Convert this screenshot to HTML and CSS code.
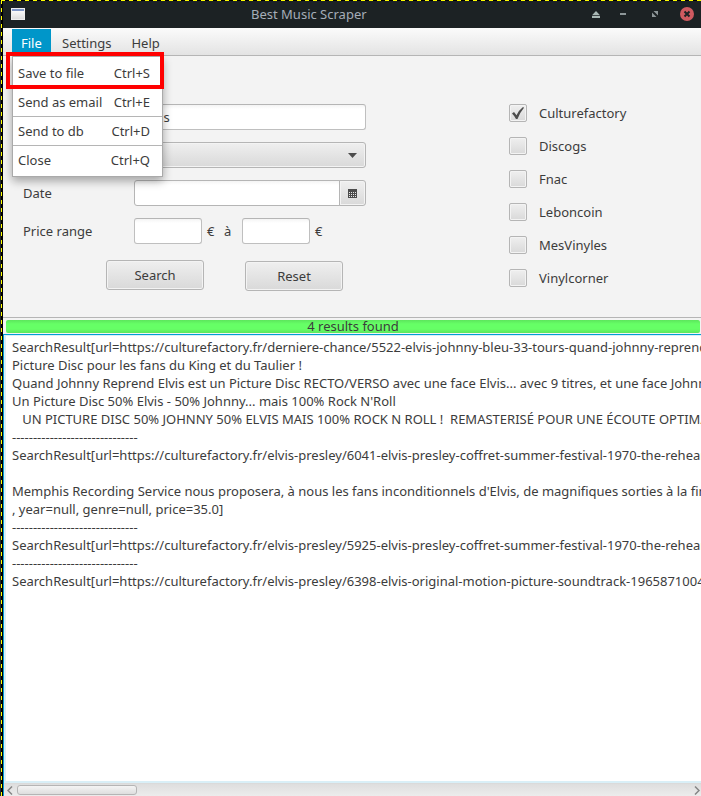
FILE: index.html
```html
<!DOCTYPE html>
<html lang="fr">
<head>
<meta charset="utf-8">
<title>Best Music Scraper</title>
<link rel="stylesheet" href="styles.css">
</head>
<body>
<div class="screen">
<div class="edge"></div>
<div class="window">
  <header class="titlebar">
    <span class="app-icon"></span>
    <span class="title">Best Music Scraper</span>
    <svg class="controls" width="121" height="27" viewBox="580 1 121 27">
      <path d="M592 15.200L596 11l4 4.200zM592 16h8v2h-8z" fill="#a9b8b5"/>
      <path d="M620 13h6v2h-6z" fill="#8d9698"/>
      <path d="M653.500 11h4.500v4.500zM652 12.500l4.500 4.500H652z" fill="#8d9698"/>
      <circle cx="687" cy="14" r="7" fill="#cf5a60"/>
      <path d="M684.500 11.500l5 5m0-5l-5 5" stroke="#1c2224" stroke-width="2"/>
    </svg>
  </header>
  <nav class="menubar">
    <span class="menu active">File</span><span class="menu">Settings</span><span class="menu">Help</span>
  </nav>
  <main class="form">
    <section class="fields">
      <div class="row"><label></label><div class="input wide">s</div></div>
      <div class="row"><label></label><div class="combo"><svg width="9" height="5"><path d="M0 0h9L4.500 5z" fill="#4c4c4c"/></svg></div></div>
      <div class="row"><label>Date</label><div class="date"><div class="date-text"></div><div class="date-button">
        <svg width="9" height="9" shape-rendering="crispEdges"><path d="M0 0h9v9H0z" fill="#4c4c4c"/><path d="M1 3.500h7M1 5.500h7M1 7.500h7" stroke="#e6e6e6" stroke-dasharray="1 1"/></svg>
      </div></div></div>
      <div class="row price"><label>Price range</label><div class="input small"></div><span class="euro">€</span><span class="to">à</span><div class="input small"></div><span class="euro">€</span></div>
      <div class="buttons"><div class="button">Search</div><div class="button reset">Reset</div></div>
    </section>
    <section class="shops">
      <div class="check"><span class="box"><svg width="12" height="13" viewBox="0 0 12 13"><path d="M0 6.500L2 5l2.500 3.200Q7 3 11 0l1 .7Q7.500 6 5.500 12H4Q2.500 9 0 6.500z" fill="#4c4c4c"/></svg></span>Culturefactory</div>
      <div class="check"><span class="box"></span>Discogs</div>
      <div class="check"><span class="box"></span>Fnac</div>
      <div class="check"><span class="box"></span>Leboncoin</div>
      <div class="check"><span class="box"></span>MesVinyles</div>
      <div class="check"><span class="box"></span>Vinylcorner</div>
    </section>
  </main>
  <div class="status"><div class="bar">4 results found</div></div>
  <div class="results">
<pre class="text">SearchResult[url=https://culturefactory.fr/derniere-chance/5522-elvis-johnny-bleu-33-tours-quand-johnny-reprend-elvis.html
Picture Disc pour les fans du King et du Taulier !
Quand Johnny Reprend Elvis est un Picture Disc RECTO/VERSO avec une face Elvis... avec 9 titres, et une face Johnny
Un Picture Disc 50% Elvis - 50% Johnny... mais 100% Rock N'Roll
   UN PICTURE DISC 50% JOHNNY 50% ELVIS MAIS 100% ROCK N ROLL !  REMASTERISÉ POUR UNE ÉCOUTE OPTIMALE
------------------------------
SearchResult[url=https://culturefactory.fr/elvis-presley/6041-elvis-presley-coffret-summer-festival-1970-the-rehearsals.html

Memphis Recording Service nous proposera, à nous les fans inconditionnels d'Elvis, de magnifiques sorties à la fin
, year=null, genre=null, price=35.0]
------------------------------
SearchResult[url=https://culturefactory.fr/elvis-presley/5925-elvis-presley-coffret-summer-festival-1970-the-rehearsals.html
------------------------------
SearchResult[url=https://culturefactory.fr/elvis-presley/6398-elvis-original-motion-picture-soundtrack-196587100421.html</pre>
    <div class="scrollbar">
      <svg width="6" height="9"><path d="M5 .5L1 4.500l4 4" fill="none" stroke="#858585" stroke-width="1.500"/></svg>
      <span class="thumb"></span>
      <svg class="next" width="6" height="9"><path d="M1 .5l4 4-4 4" fill="none" stroke="#858585" stroke-width="1.500"/></svg>
    </div>
  </div>
</div>
<div class="popup">
  <div class="item"><span>Save to file</span><span class="key">Ctrl+S</span></div>
  <div class="item"><span>Send as email</span><span class="key">Ctrl+E</span></div>
  <div class="item"><span>Send to db</span><span class="key">Ctrl+D</span></div>
  <div class="item"><span>Close</span><span class="key">Ctrl+Q</span></div>
</div>
<div class="highlight"></div>
</div>
</body>
</html>
```
FILE: styles.css
```css
* { box-sizing: border-box; }
body { margin: 0; overflow: hidden; font: 13px/18px "Noto Sans", "Open Sans", sans-serif; color: #3c3c3c; background: #f3f3f3; }
.screen { position: relative; display: flex; width: 701px; height: 796px; overflow: hidden; }
.screen::before { content: ""; position: absolute; top: 0; left: 0; width: 701px; height: 1px; background: repeating-linear-gradient(90deg, #000 0 1px, #ff0 1px 5px, #000 5px 8px); }
.edge { flex: none; width: 3px; background: linear-gradient(90deg, #24292b 1px, transparent 1px 2px, #000 2px), repeating-linear-gradient(180deg, #ff0 0 4px, #000 4px 8px); }
.window { flex: 1; min-width: 0; display: flex; flex-direction: column; padding-top: 1px; }
.titlebar { height: 27px; flex: none; background: #1c2224; display: flex; align-items: center; padding-left: 8px; }
.app-icon { width: 14px; height: 12px; margin-bottom: 1px; background: linear-gradient(#7e96c6 0 2px, #fafafa 2px, #ddd); border: 1px solid #eee; }
.title { margin-left: 226px; padding-bottom: 2px; color: #a5adb8; }
.controls { margin-left: auto; }
.menubar { height: 28px; flex: none; background: linear-gradient(#fbfbfb, #e3e3e3); border-bottom: 1px solid #b5b5b5; padding: 1px 0 0 9px; display: flex; }
.menu { padding: 5px 9px 0; height: 26px; margin-right: 2px; }
.active { width: 39px; background: #0096c9; color: #fff; }
.form { height: 261px; flex: none; display: flex; background: #f3f3f3; }
.fields { width: 485px; padding: 48px 0 0 20px; }
.row { height: 26px; margin-bottom: 12px; display: flex; align-items: center; }
.row label { width: 111px; }
.input, .date-text { height: 26px; background: linear-gradient(#f4f4f4, #fff 4px); border: 1px solid #bfbfbf; border-top-color: #b5b5b5; border-radius: 3px; }
.wide { width: 232px; padding: 3px 7px 3px 28.500px; }
.combo, .button, .date-button, .box { border: 1px solid #b5b5b5; border-radius: 3px; background: linear-gradient(#efefef, #d9d9d9); box-shadow: inset 0 0 0 1px #f3f3f3; }
.combo { width: 232px; height: 26px; display: flex; align-items: center; justify-content: flex-end; padding-right: 8px; }
.date { display: flex; }
.date-text { width: 206px; border-color: #b5b5b5; border-radius: 3px 0 0 3px; }
.date-button { width: 27px; margin-left: -1px; border-radius: 0 3px 3px 0; display: grid; place-items: center; }
.small { width: 68px; }
.euro { margin-left: 5px; width: 8px; }
.to { margin: 0 10px 0 9px; width: 8px; padding-bottom: 1px; }
.buttons { display: flex; padding: 4px 0 0 83px; gap: 41px; }
.button { width: 98px; height: 30px; padding-top: 5px; text-align: center; }
.reset { margin-top: 1px; }
.shops { padding: 48px 0 0 21px; }
.check { height: 18px; margin-bottom: 15px; display: flex; align-items: center; gap: 12px; }
.box { width: 18px; height: 18px; display: grid; place-items: center; border-radius: 2px; }
.status { height: 17px; flex: none; border-top: 1px solid #b5b5b5; padding: 2px 1px 0 3px; background: #f3f3f3; }
.bar { height: 13px; line-height: 13px; text-align: center; background: linear-gradient(#5ce65c, #6f6 4px, #6f6 9px, #5ce65c); border-radius: 2px; }
.results { flex: 1; min-height: 0; display: flex; flex-direction: column; border-top: 1px solid #039ed3; border-left: 1px solid #039ed3; background: #fff; }
.text { flex: 1; margin: 0; font: inherit; padding: 2px 0 0 6px; white-space: pre; overflow: hidden; border: solid #d9eff7; border-width: 1px 0 2px 2px; }
.scrollbar { height: 13px; flex: none; display: flex; align-items: center; padding: 0 1px 0 3px; background: linear-gradient(#dedede, #ececec); border-top: 1px solid #dadada; }
.thumb { width: 120px; height: 10px; margin-left: 4px; border: 1px solid #b5b5b5; border-radius: 3px; background: linear-gradient(#f4f4f4, #dedede); }
.next { margin-left: auto; }
.popup { position: absolute; left: 12px; top: 56px; width: 151px; height: 121px; background: #fff; border: 1px solid #aaa; box-shadow: 0 4px 9px #0005; padding-top: 2px; }
.item { height: 29px; padding: 5px 12px 0 5px; display: flex; justify-content: space-between; border-bottom: 1px solid #b5b5b5; }
.item:last-child { border: 0; }
.highlight { position: absolute; left: 6px; top: 52px; width: 158px; height: 37px; border: 4px solid #f00; }
```
